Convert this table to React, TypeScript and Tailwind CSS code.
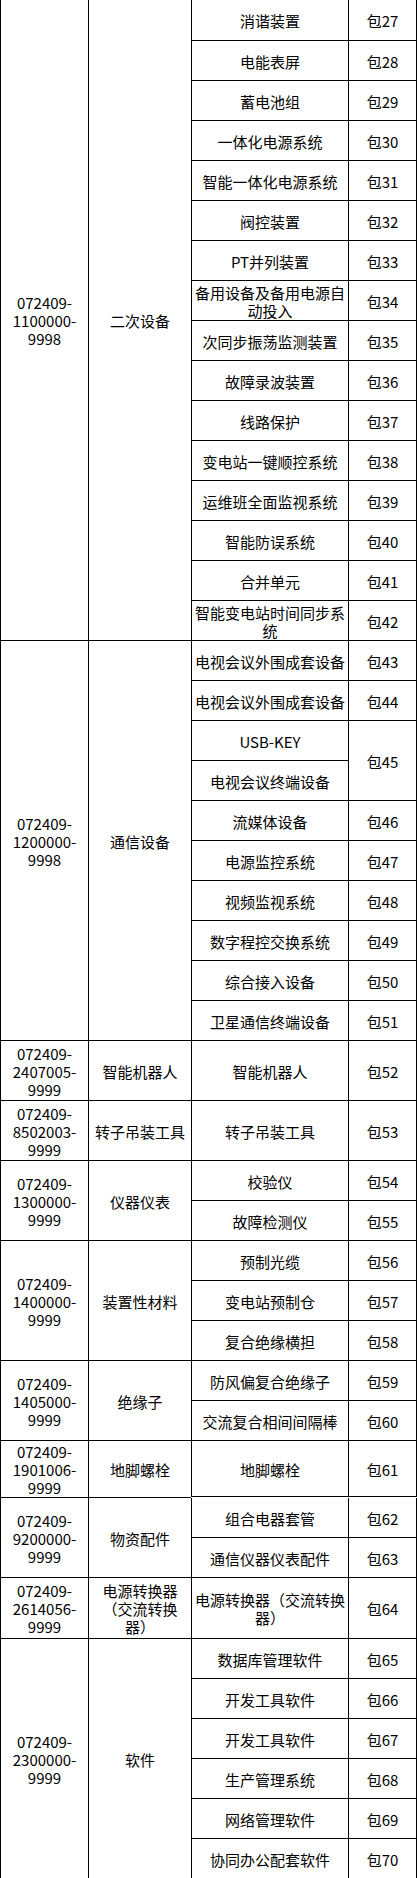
import React from "react";

type Row =
  | { kind: "single"; name: string[]; pkg: string; h: string }
  | { kind: "pair"; names: [string, string]; pkg: string };

type Group = { code: string[]; cat: string[]; rows: Row[] };

const s = (name: string | string[], pkg: string, h = "h-[40px]"): Row => ({
  kind: "single",
  name: Array.isArray(name) ? name : [name],
  pkg,
  h,
});

const groups: Group[] = [
  {
    code: ["072409-", "1100000-", "9998"],
    cat: ["二次设备"],
    rows: [
      s("消谐装置", "包27", "h-[41px]"),
      s("电能表屏", "包28"),
      s("蓄电池组", "包29"),
      s("一体化电源系统", "包30"),
      s("智能一体化电源系统", "包31"),
      s("阀控装置", "包32"),
      s("PT并列装置", "包33"),
      s(["备用设备及备用电源自", "动投入"], "包34"),
      s("次同步振荡监测装置", "包35"),
      s("故障录波装置", "包36"),
      s("线路保护", "包37"),
      s("变电站一键顺控系统", "包38"),
      s("运维班全面监视系统", "包39"),
      s("智能防误系统", "包40"),
      s("合并单元", "包41"),
      s(["智能变电站时间同步系", "统"], "包42"),
    ],
  },
  {
    code: ["072409-", "1200000-", "9998"],
    cat: ["通信设备"],
    rows: [
      s("电视会议外围成套设备", "包43"),
      s("电视会议外围成套设备", "包44"),
      { kind: "pair", names: ["USB-KEY", "电视会议终端设备"], pkg: "包45" },
      s("流媒体设备", "包46"),
      s("电源监控系统", "包47"),
      s("视频监视系统", "包48"),
      s("数字程控交换系统", "包49"),
      s("综合接入设备", "包50"),
      s("卫星通信终端设备", "包51"),
    ],
  },
  {
    code: ["072409-", "2407005-", "9999"],
    cat: ["智能机器人"],
    rows: [s("智能机器人", "包52", "h-[60px]")],
  },
  {
    code: ["072409-", "8502003-", "9999"],
    cat: ["转子吊装工具"],
    rows: [s("转子吊装工具", "包53", "h-[60px]")],
  },
  {
    code: ["072409-", "1300000-", "9999"],
    cat: ["仪器仪表"],
    rows: [s("校验仪", "包54"), s("故障检测仪", "包55")],
  },
  {
    code: ["072409-", "1400000-", "9999"],
    cat: ["装置性材料"],
    rows: [s("预制光缆", "包56"), s("变电站预制仓", "包57"), s("复合绝缘横担", "包58")],
  },
  {
    code: ["072409-", "1405000-", "9999"],
    cat: ["绝缘子"],
    rows: [s("防风偏复合绝缘子", "包59"), s("交流复合相间间隔棒", "包60")],
  },
  {
    code: ["072409-", "1901006-", "9999"],
    cat: ["地脚螺栓"],
    rows: [s("地脚螺栓", "包61", "h-[56px]")],
  },
  {
    code: ["072409-", "9200000-", "9999"],
    cat: ["物资配件"],
    rows: [s("组合电器套管", "包62"), s("通信仪器仪表配件", "包63")],
  },
  {
    code: ["072409-", "2614056-", "9999"],
    cat: ["电源转换器", "（交流转换", "器）"],
    rows: [s(["电源转换器（交流转换", "器）"], "包64", "h-[61px]")],
  },
  {
    code: ["072409-", "2300000-", "9999"],
    cat: ["软件"],
    rows: [
      s("数据库管理软件", "包65"),
      s("开发工具软件", "包66"),
      s("开发工具软件", "包67"),
      s("生产管理系统", "包68"),
      s("网络管理软件", "包69"),
      s("协同办公配套软件", "包70"),
    ],
  },
];

function Lines({ lines }: { lines: string[] }) {
  return (
    <div className="text-center pt-[2px] leading-[18px]">
      {lines.map((l, i) => (
        <div key={i} className="whitespace-nowrap">
          {l}
        </div>
      ))}
    </div>
  );
}

export default function App() {
  return (
    <div className="w-[417px] bg-white text-black text-[15px] font-['Noto_Sans_CJK_SC','Noto_Sans',sans-serif]">
      {groups.map((g, gi) => (
        <div key={gi} className="flex">
          <div className="w-[88px] shrink-0 flex items-center justify-center border-l border-b border-black">
            <Lines lines={g.code} />
          </div>
          <div className="w-[103px] shrink-0 flex items-center justify-center border-l border-b border-black">
            <Lines lines={g.cat} />
          </div>
          <div className="w-[226px] shrink-0 flex flex-col">
            {g.rows.map((r, ri) =>
              r.kind === "single" ? (
                <div key={ri} className={`flex ${r.h}`}>
                  <div className="w-[157px] shrink-0 flex items-center justify-center border-l border-b border-black">
                    <Lines lines={r.name} />
                  </div>
                  <div className="w-[69px] shrink-0 flex items-center justify-center border-l border-r border-b border-black">
                    <Lines lines={[r.pkg]} />
                  </div>
                </div>
              ) : (
                <div key={ri} className="flex h-[80px]">
                  <div className="w-[157px] shrink-0 flex flex-col">
                    <div className="h-[40px] flex items-center justify-center border-l border-b border-black">
                      <Lines lines={[r.names[0]]} />
                    </div>
                    <div className="h-[40px] flex items-center justify-center border-l border-b border-black">
                      <Lines lines={[r.names[1]]} />
                    </div>
                  </div>
                  <div className="w-[69px] shrink-0 flex items-center justify-center border-l border-r border-b border-black">
                    <Lines lines={[r.pkg]} />
                  </div>
                </div>
              )
            )}
          </div>
        </div>
      ))}
    </div>
  );
}
